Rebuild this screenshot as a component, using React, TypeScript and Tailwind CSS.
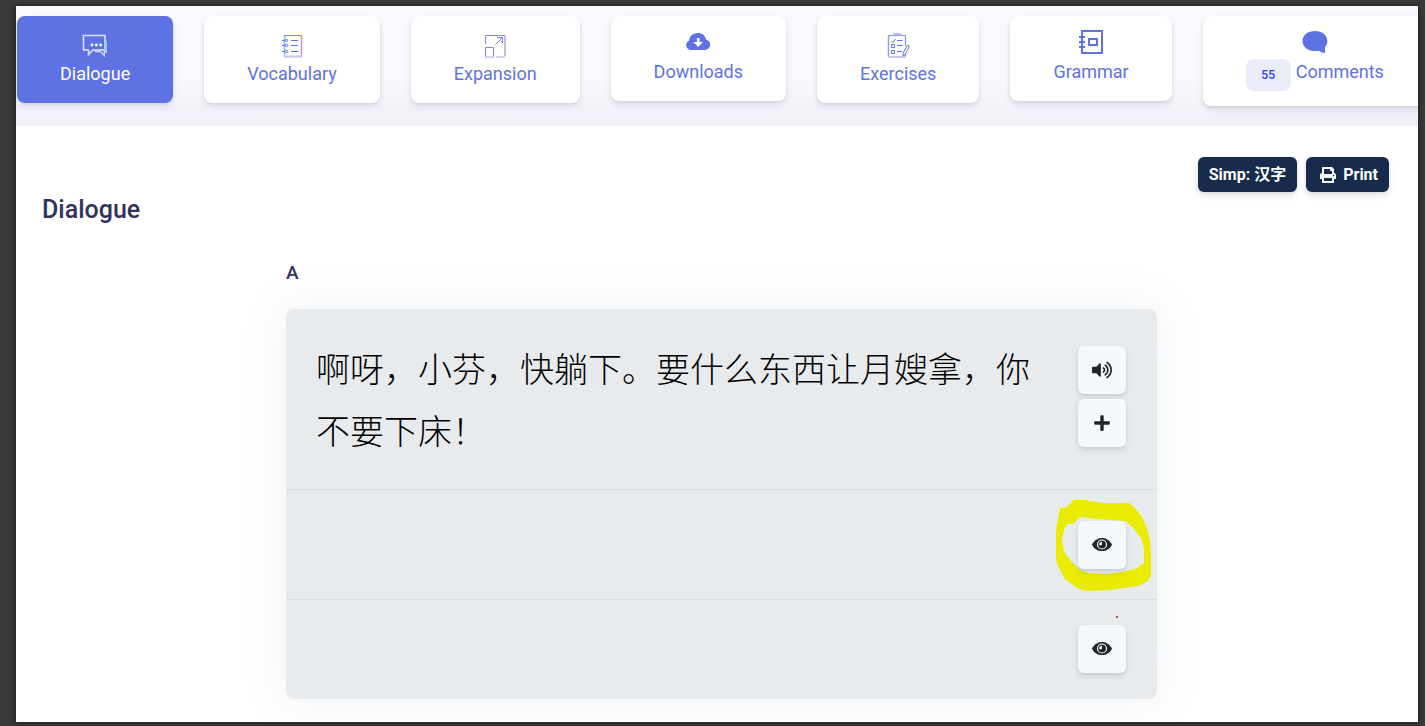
import React from 'react'
import { FaPlus, FaPrint, FaVolumeUp } from 'react-icons/fa'

interface TabItem {
  name: string
  icon: React.ReactNode
  size: string
  badge?: number
}

const DialogueIcon = () => (
  <svg className="h-7 w-7" viewBox="0 0 28 28" fill="none">
    <path d="M2.5 3.5h21.5v14.5h-12l-4.5 4.5v-4.5h-5z" stroke="#dfe2fb" strokeWidth="1.6" />
    <path d="M25.3 9.5v10.3h-2v3.6l-4-3.8h-4.5l-1-1" stroke="#d3d9fb" strokeWidth="1.4" />
    <path d="M25 10v9" stroke="#63cdfb" strokeWidth="1.5" />
    <circle cx="11" cy="13" r="1.4" fill="#fff" />
    <circle cx="15.3" cy="13" r="1.4" fill="#fff" />
    <circle cx="19.6" cy="13" r="1.4" fill="#fff" />
  </svg>
)

const VocabularyIcon = () => (
  <svg className="h-7 w-7" viewBox="0 0 28 28" fill="none">
    <path d="M6.5 3v21.5" stroke="#8fc4f3" strokeWidth="1.6" />
    <path d="M6 3.5h17" stroke="#7f86e6" />
    <path d="M23.5 3v21" stroke="#bd93e6" strokeWidth="1.5" />
    <path d="M6 24.5h18" stroke="#c5c5ef" strokeWidth="2" />
    <path d="M4 8.5h3M4 13.5h3M4 19.5h3M13 8.5h7M13 13.5h7M13 19.5h7" stroke="#5e72e4" />
    <circle cx="8.5" cy="8.5" r="1.2" stroke="#5e72e4" />
    <circle cx="8.5" cy="13.5" r="1.2" stroke="#5e72e4" />
    <circle cx="8.5" cy="19.5" r="1.2" stroke="#5e72e4" />
  </svg>
)

const ExpansionIcon = () => (
  <svg className="h-7 w-7" viewBox="0 0 28 28" fill="none">
    <path d="M4.5 12V3.5h19.5M4.5 25v-9.5h8V25" stroke="#8186e4" />
    <path d="M24 3v21" stroke="#c29ce9" strokeWidth="1.5" />
    <path d="M15 25h9M4 25h9" stroke="#c5c5ef" strokeWidth="1.6" />
    <path d="M14.5 12.5l7-7M16 5.5h5.5V11" stroke="#8186e4" />
  </svg>
)

const DownloadsIcon = () => (
  <svg className="h-7 w-7" viewBox="0 0 28 28">
    <path
      d="M7 22a5 5 0 0 1-4.8-5.2c0-2.1 1.2-3.7 3-4.4C5.5 8 9 5 13.8 5c4.3 0 7.6 2.7 8.3 6.7 2.5.5 4 2.4 4 4.900A5.2 5.2 0 0 1 21 22z"
      fill="#5e72e4"
    />
    <path d="M13 10h2.5v4H19l-4.800 5-4.800-5H13z" fill="#fff" />
  </svg>
)

const ExercisesIcon = () => (
  <svg className="h-7 w-7" viewBox="0 0 28 28" fill="none">
    <path d="M4.5 3.5v21" stroke="#a699e9" strokeWidth="1.5" />
    <path d="M4 3.5h18M21.5 3.5V14M21.5 21v3" stroke="#8097e6" strokeWidth="1.2" />
    <path d="M4 25h17.5" stroke="#c5c5ef" strokeWidth="2" />
    <path d="M9.5 3.5l1-1.5h5.5l1 1.5" stroke="#b9bdec" strokeWidth="2" />
    <path d="M7.5 9l1.5 1.5L11.5 7M7.5 12.5h3v3h-3zM7.5 18.5h3v3h-3zM13 8.5h5.5M13 13.5h5.5M13 19.5h5" stroke="#5e72e4" />
    <path d="M23.5 13.2l2 1-4.3 8.3-2.2 1.5v-3z" stroke="#5e72e4" />
  </svg>
)

const GrammarIcon = () => (
  <svg className="h-7 w-7" viewBox="0 0 28 28" fill="none" stroke="#5e72e4" strokeWidth="2">
    <path d="M5 3h20v22H5z" />
    <path d="M12 11h8v6h-8z" />
    <path d="M2 9h6M2 14h6M2 19h6" />
  </svg>
)

const CommentsIcon = () => (
  <svg className="h-7 w-7" viewBox="0 0 28 28">
    <path
      d="M14 3c7 0 12.3 4 12.3 10 0 2.8-1 4.7-2.3 6.2V25c-2.7-.3-4.8-1-6.3-2.2-1.1.2-2.4.3-3.7.3C6.8 23.1 1.5 19 1.5 13S6.8 3 14 3z"
      fill="#5e72e4"
    />
  </svg>
)

const EyeIcon = () => (
  <svg className="h-5 w-5" viewBox="0 0 20 20" fill="none">
    <path
      d="M0.2 9.2C2.2 5.4 5.8 3 10 3s7.8 2.4 9.8 6.2c.2.3.2.7 0 1C17.8 13.8 14.2 16 10 16s-7.8-2.2-9.8-5.8c-.2-.3-.2-.7 0-1z"
      fill="#212529"
    />
    <circle cx="10" cy="9.5" r="4.5" stroke="#f6f9fc" strokeWidth="1.2" />
    <path d="M10 6.8a2.8 2.8 0 0 0-2.8 2.8 1.5 1.5 0 0 0 2.8-.3z" fill="#f6f9fc" />
  </svg>
)

const tabs: TabItem[] = [
  { name: 'Dialogue', icon: <DialogueIcon />, size: 'h-[87px] pt-4' },
  { name: 'Vocabulary', icon: <VocabularyIcon />, size: 'h-[87px] pt-4' },
  { name: 'Expansion', icon: <ExpansionIcon />, size: 'h-[87px] pt-4' },
  { name: 'Downloads', icon: <DownloadsIcon />, size: 'h-[85px] gap-0.5 pt-3' },
  { name: 'Exercises', icon: <ExercisesIcon />, size: 'h-[87px] pt-4' },
  { name: 'Grammar', icon: <GrammarIcon />, size: 'h-[85px] gap-0.5 pt-3' },
  { name: 'Comments', icon: <CommentsIcon />, size: 'h-[90px] gap-0.5 pt-3', badge: 55 },
]

const Tab = ({ tab, active }: { tab: TabItem; active: boolean }) => (
  <button
    className={`flex shrink-0 flex-col items-center rounded-lg px-[43px] text-lg leading-7 shadow-[0_4px_6px_rgba(50,50,93,0.11),0_1px_3px_rgba(0,0,0,0.08)] ${tab.size} ${
      active ? 'bg-[#5e72e4] text-white' : 'bg-white text-[#5e72e4]'
    }`}
  >
    {tab.icon}
    <span className="flex items-start gap-[5px]">
      {tab.badge && (
        <span className="mt-px flex h-8 w-[45px] items-center justify-center rounded-lg bg-[#eaecfb] text-xs font-medium text-[#2643e9]">
          {tab.badge}
        </span>
      )}
      {tab.name}
    </span>
  </button>
)

const IconButton = ({ label, children }: { label: string; children: React.ReactNode }) => (
  <button
    aria-label={label}
    className="relative flex h-12 w-12 items-center justify-center rounded-md bg-[#f6f9fc] text-[#212529] shadow-[0_4px_6px_rgba(50,50,93,0.11),0_1px_3px_rgba(0,0,0,0.08)]"
  >
    {children}
  </button>
)

// Hand drawn marker ring behind the first reveal button
const MarkerRing = () => (
  <svg className="absolute -top-[21px] -left-[22px] h-[92px] w-24" viewBox="0 0 96 92">
    <path
      fillRule="evenodd"
      fill="#e9ec00"
      d="M18 0H30L32 1L50 3L73 3L79 8L86 17L91 28L94 40L95 57V75L92 81L82 86L54 90L29 91L21 88L9 79L3 68L0 60V30L4 8L11 7ZM11 24H17L20 21L24 17L41 19L70 21L79 30L86 40L88 50V63L81 68L71 71L52 74L32 73L24 70L16 62L8 52L6 40L8 30Z"
    />
  </svg>
)

const actionButton =
  'flex h-[35px] items-center rounded-md bg-[#172b4d] text-base font-bold text-white shadow-[0_4px_6px_rgba(50,50,93,0.11),0_1px_3px_rgba(0,0,0,0.08)]'

export default function App() {
  return (
    <div className="min-h-screen bg-[#3a3a3a] pt-1.5 pr-[7px] pb-1 pl-4 font-[Roboto,'Noto_Sans_CJK_SC',sans-serif]">
      <div className="min-h-[716px] overflow-hidden bg-white shadow-[0_0_6px_rgba(0,0,0,0.6)]">
        <nav className="flex h-[120px] items-start gap-[31px] overflow-hidden bg-linear-to-b from-[#f8f9fe] from-60% to-[#eff0f7] pt-2.5 pl-px">
          {tabs.map((tab) => (
            <Tab key={tab.name} tab={tab} active={tab.name === 'Dialogue'} />
          ))}
        </nav>

        <main className="pt-[31px] pr-[29px] pb-[23px] pl-[26px]">
          <div className="flex justify-end gap-[9px]">
            <button className={`${actionButton} px-[11px]`}>Simp: 汉字</button>
            <button className={`${actionButton} gap-[7px] pr-[11px] pl-3.5`}>
              <FaPrint className="h-4 w-4" />
              Print
            </button>
          </div>
          <h2 className="text-[25px] leading-9 font-medium text-[#32325d]">Dialogue</h2>

          <div className="pt-[33px] pl-3">
            <div className="mx-auto max-w-[871px]">
              <h3 className="text-[19px] leading-6 font-medium text-[#32325d]">A</h3>
              <section className="mt-6 rounded-lg bg-[#e8ebee] shadow-[0_0_45px_rgba(134,151,168,0.14)]">
                <div className="flex gap-5 border-b border-[#d9dee2] pt-[30px] pr-[31px] pb-[26px] pl-[30px]">
                  <p lang="zh-CN" className="flex-1 text-[34px] leading-[62px] font-light text-black">
                    啊呀，小芬，快躺下。要什么东西让月嫂拿，你不要下床！
                  </p>
                  <div className="flex flex-col gap-[5px] pt-[7px]">
                    <IconButton label="Play audio">
                      <FaVolumeUp className="h-5 w-5" />
                    </IconButton>
                    <IconButton label="Add">
                      <FaPlus className="h-[18px] w-[18px]" />
                    </IconButton>
                  </div>
                </div>
                <div className="flex justify-end border-b border-[#d9dee2] pt-[31px] pr-[31px] pb-[30px]">
                  <div className="relative">
                    <MarkerRing />
                    <IconButton label="Show pinyin">
                      <EyeIcon />
                    </IconButton>
                  </div>
                </div>
                <div className="flex justify-end pt-[25px] pr-[31px] pb-[26px]">
                  <div className="relative">
                    <span className="absolute -top-[9px] left-[38px] h-0.5 w-0.5 rounded-full bg-red-600" />
                    <IconButton label="Show translation">
                      <EyeIcon />
                    </IconButton>
                  </div>
                </div>
              </section>
            </div>
          </div>
        </main>
      </div>
    </div>
  )
}
